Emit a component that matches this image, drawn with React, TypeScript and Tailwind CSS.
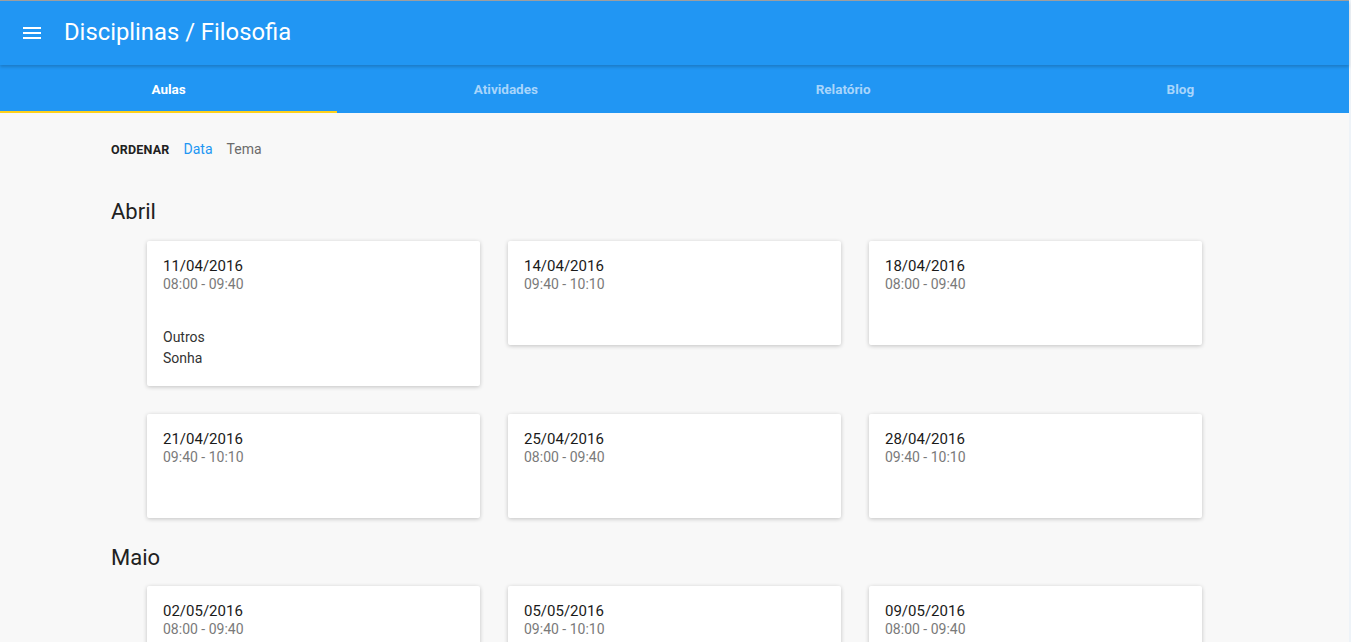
import React from "react";

type Aula = { date: string; time: string; lines?: string[] };

const abril: Aula[] = [
  { date: "11/04/2016", time: "08:00 - 09:40", lines: ["Outros", "Sonha"] },
  { date: "14/04/2016", time: "09:40 - 10:10" },
  { date: "18/04/2016", time: "08:00 - 09:40" },
  { date: "21/04/2016", time: "09:40 - 10:10" },
  { date: "25/04/2016", time: "08:00 - 09:40" },
  { date: "28/04/2016", time: "09:40 - 10:10" },
];

const maio: Aula[] = [
  { date: "02/05/2016", time: "08:00 - 09:40" },
  { date: "05/05/2016", time: "09:40 - 10:10" },
  { date: "09/05/2016", time: "08:00 - 09:40" },
];

function Card({ a }: { a: Aula }) {
  return (
    <div className="bg-white rounded-[2px] shadow-[0_1px_4px_rgba(0,0,0,0.22)]">
      <div className="px-4 pt-4">
        <div className="text-[15px] leading-[18px] text-[#1a1a1a]">{a.date}</div>
        <div className="text-[14px] leading-[18px] text-[#7a7a7a]">{a.time}</div>
      </div>
      <div className="px-4 pt-[34px] pb-[18px]">
        {a.lines?.map((l) => (
          <div key={l} className="text-[14px] leading-[20.5px] text-[#333]">
            {l}
          </div>
        ))}
      </div>
    </div>
  );
}

function Section({ title, items, first }: { title: string; items: Aula[]; first?: boolean }) {
  return (
    <div className={first ? "" : "mt-[25px]"}>
      <div className={"text-[22px] leading-[30px] text-[#212121] " + (first ? "mb-[14px]" : "mb-[13px]")}>
        {title}
      </div>
      <div className="ml-9 grid grid-cols-[333px_333px_333px] gap-7 items-start">
        {items.map((a) => (
          <Card key={a.date} a={a} />
        ))}
      </div>
    </div>
  );
}

export default function App() {
  const tabs = ["Aulas", "Atividades", "Relatório", "Blog"];
  return (
    <div
      className="h-[642px] overflow-hidden flex bg-[#eef3f8]"
      style={{ fontFamily: "Roboto, 'Noto Sans', sans-serif" }}
    >
      <div className="w-[1349px] flex flex-col bg-[#f8f8f8]">
        <div className="h-px shrink-0 bg-[#a0a0a0]" />
        <header className="relative z-10 h-16 shrink-0 bg-[#2196f3] flex items-center shadow-[0_2px_3px_rgba(0,0,0,0.18)]">
          <div className="w-16 flex justify-center pl-[1px] pr-[1px]">
            <svg width="18" height="12" viewBox="0 0 18 12">
              <rect x="0" y="0" width="18" height="2" fill="white" />
              <rect x="0" y="5" width="18" height="2" fill="white" />
              <rect x="0" y="10" width="18" height="2" fill="white" />
            </svg>
          </div>
          <h1 className="text-white text-[23.8px] leading-none pb-[1px]">Disciplinas / Filosofia</h1>
        </header>
        <nav className="h-12 shrink-0 bg-[#2196f3] grid grid-cols-4">
          {tabs.map((t, i) => (
            <div key={t} className="relative flex items-center justify-center">
              <span
                className={
                  "text-[13.5px] font-bold " + (i === 0 ? "text-white" : "text-[#a8d5fb]")
                }
              >
                {t}
              </span>
              {i === 0 && (
                <div className="absolute left-0 right-0 bottom-0 h-[2px] bg-[#ffd11a]" />
              )}
            </div>
          ))}
        </nav>
        <main className="pl-[111px] pt-7 shrink-0">
          <div className="flex items-center h-[18px] gap-[14px] text-[14px]">
            <span className="font-bold text-[12.5px] text-[#212121] tracking-[0.2px]">ORDENAR</span>
            <span className="text-[#2196f3] -mt-[2px]">Data</span>
            <span className="text-[#6b6b6b] -mt-[2px]">Tema</span>
          </div>
          <div className="mt-[38px] flex flex-col">
            <Section title="Abril" items={abril} first />
            <Section title="Maio" items={maio} />
          </div>
        </main>
      </div>
    </div>
  );
}
